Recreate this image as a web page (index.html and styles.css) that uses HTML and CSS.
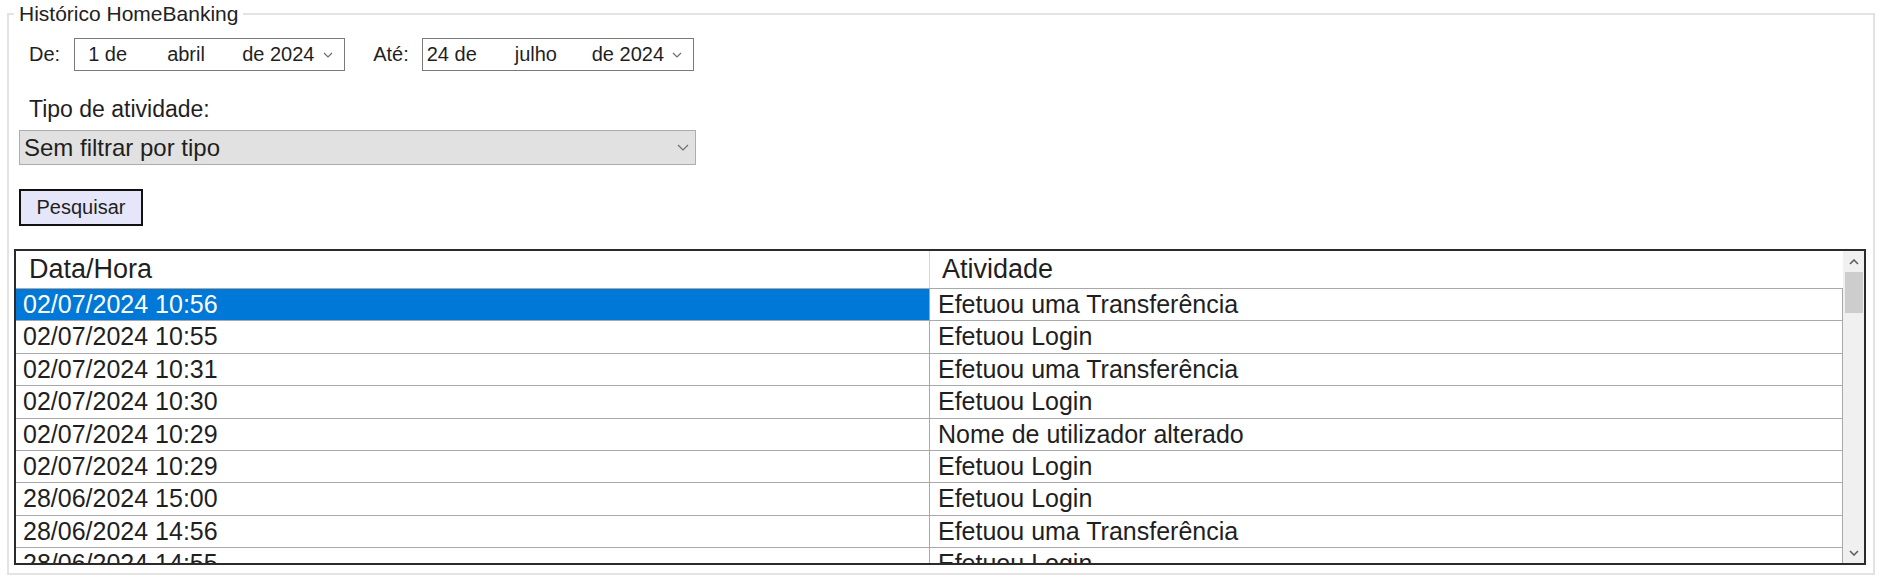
FILE: index.html
```html
<!DOCTYPE html>
<html lang="pt">
<head>
<meta charset="utf-8">
<title>Histórico HomeBanking</title>
<link rel="stylesheet" href="styles.css">
</head>
<body>
<fieldset class="group">
  <legend class="group-title">Histórico HomeBanking</legend>
  <div class="dates">
    <span class="lbl">De:</span>
    <div class="datebox from">
      <span class="day">1 de</span><span class="month">abril</span><span class="year">de 2024</span>
      <svg class="chev" viewBox="0 0 10 6" width="10" height="6"><path d="M1 1 L5 5 L9 1" /></svg>
    </div>
    <span class="lbl ate">Até:</span>
    <div class="datebox to">
      <span class="day">24 de</span><span class="month">julho</span><span class="year">de 2024</span>
      <svg class="chev" viewBox="0 0 10 6" width="10" height="6"><path d="M1 1 L5 5 L9 1" /></svg>
    </div>
  </div>
  <div class="type-label">Tipo de atividade:</div>
  <div class="select">
    <span class="select-text">Sem filtrar por tipo</span>
    <svg class="chev sel-chev" viewBox="0 0 12 7" width="12" height="7"><path d="M1 1 L6 6 L11 1" /></svg>
  </div>
  <button class="btn" type="button">Pesquisar</button>
  <div class="grid">
    <div class="grid-body">
      <div class="row head"><div class="c1">Data/Hora</div><div class="c2">Atividade</div></div>
      <div class="row selected"><div class="c1">02/07/2024 10:56</div><div class="c2">Efetuou uma Transferência</div></div>
      <div class="row"><div class="c1">02/07/2024 10:55</div><div class="c2">Efetuou Login</div></div>
      <div class="row"><div class="c1">02/07/2024 10:31</div><div class="c2">Efetuou uma Transferência</div></div>
      <div class="row"><div class="c1">02/07/2024 10:30</div><div class="c2">Efetuou Login</div></div>
      <div class="row"><div class="c1">02/07/2024 10:29</div><div class="c2">Nome de utilizador alterado</div></div>
      <div class="row"><div class="c1">02/07/2024 10:29</div><div class="c2">Efetuou Login</div></div>
      <div class="row"><div class="c1">28/06/2024 15:00</div><div class="c2">Efetuou Login</div></div>
      <div class="row"><div class="c1">28/06/2024 14:56</div><div class="c2">Efetuou uma Transferência</div></div>
      <div class="row"><div class="c1">28/06/2024 14:55</div><div class="c2">Efetuou Login</div></div>
    </div>
    <div class="scrollbar">
      <div class="sb-btn"><svg viewBox="0 0 10 6" width="10" height="6"><path d="M1 5 L5 1 L9 5" /></svg></div>
      <div class="sb-track"><div class="sb-thumb"></div></div>
      <div class="sb-btn"><svg viewBox="0 0 10 6" width="10" height="6"><path d="M1 1 L5 5 L9 1" /></svg></div>
    </div>
  </div>
</fieldset>
</body>
</html>
```

FILE: styles.css
```css
html, body {
  margin: 0;
  padding: 0;
  background: #ffffff;
}

body {
  font-family: "Liberation Sans", Arial, sans-serif;
  color: #1f1f1f;
}

.group {
  margin: 2px 5px 6px 7px;
  border: 2px solid #e3e3e3;
  padding: 12px 7px 8px 5px;
  min-width: 0;
}

.group-title {
  font-size: 21px;
  line-height: 24px;
  padding: 0 5px;
  color: #222;
}

.dates {
  display: flex;
  align-items: center;
  height: 33px;
  padding-left: 15px;
}

.lbl {
  font-size: 20px;
}

.lbl.ate {
  margin-left: 28px;
}

.datebox {
  box-sizing: border-box;
  height: 33px;
  border: 1px solid #7a7a7a;
  background: #fff;
  display: flex;
  align-items: center;
  font-size: 20px;
  margin-left: 14px;
  width: 271px;
}

.datebox.from {
  padding-left: 13px;
}

.datebox.from .day { width: 79px; }
.datebox.from .month { width: 75px; }

.datebox.to {
  margin-left: 13px;
  width: 272px;
  padding-left: 4px;
}

.datebox.to .day { width: 88px; }
.datebox.to .month { width: 77px; }

.datebox span {
  white-space: nowrap;
}

.chev {
  margin-left: auto;
  margin-right: 11px;
  fill: none;
  stroke: #6d6d6d;
  stroke-width: 1.2;
}

.type-label {
  font-size: 23px;
  line-height: 26px;
  margin-top: 25px;
  padding-left: 15px;
}

.select {
  box-sizing: border-box;
  margin-top: 8px;
  margin-left: 5px;
  width: 677px;
  height: 35px;
  border: 1px solid #adadad;
  background: #e1e1e1;
  display: flex;
  align-items: center;
  padding-left: 4px;
  font-size: 24px;
}

.sel-chev {
  margin-right: 6px;
}

.btn {
  display: block;
  box-sizing: border-box;
  margin: 24px 0 0 5px;
  width: 124px;
  height: 37px;
  border: 2px solid #111;
  background: #e6e6fa;
  font-family: "Liberation Sans", Arial, sans-serif;
  font-size: 20px;
  color: #1f1f1f;
  padding: 0;
}

.grid {
  box-sizing: border-box;
  margin-top: 23px;
  height: 316px;
  border: 2px solid #2b2b2b;
  display: flex;
}

.grid-body {
  flex: 1;
  min-width: 0;
  overflow: hidden;
  background: #fff;
}

.row {
  display: grid;
  grid-template-columns: 914px 1fr;
  box-sizing: border-box;
  height: 32.4px;
  border-bottom: 1px solid #a9a9a9;
  font-size: 25px;
  line-height: 31px;
}

.row .c1,
.row .c2 {
  white-space: nowrap;
  overflow: hidden;
  box-sizing: border-box;
}

.row .c1 {
  padding-left: 7px;
  border-right: 1px solid #a9a9a9;
}

.row .c2 {
  padding-left: 8px;
  border-right: 1px solid #a9a9a9;
}

.row.head {
  height: 38px;
  line-height: 37px;
  font-size: 27px;
}

.row.head .c1 {
  padding-left: 13px;
  border-right-color: #d6d6d6;
}

.row.head .c2 {
  padding-left: 12px;
  border-right: none;
}

.row.selected .c1 {
  background: #0078d7;
  color: #ffffff;
}

.scrollbar {
  width: 21px;
  background: #f0f0f0;
  display: flex;
  flex-direction: column;
}

.sb-btn {
  height: 21px;
  display: flex;
  align-items: center;
  justify-content: center;
}

.sb-btn svg {
  fill: none;
  stroke: #5f5f5f;
  stroke-width: 1.6;
}

.sb-track {
  flex: 1;
}

.sb-thumb {
  margin: 0 1px 0 2px;
  height: 41px;
  background: #cdcdcd;
}
```
